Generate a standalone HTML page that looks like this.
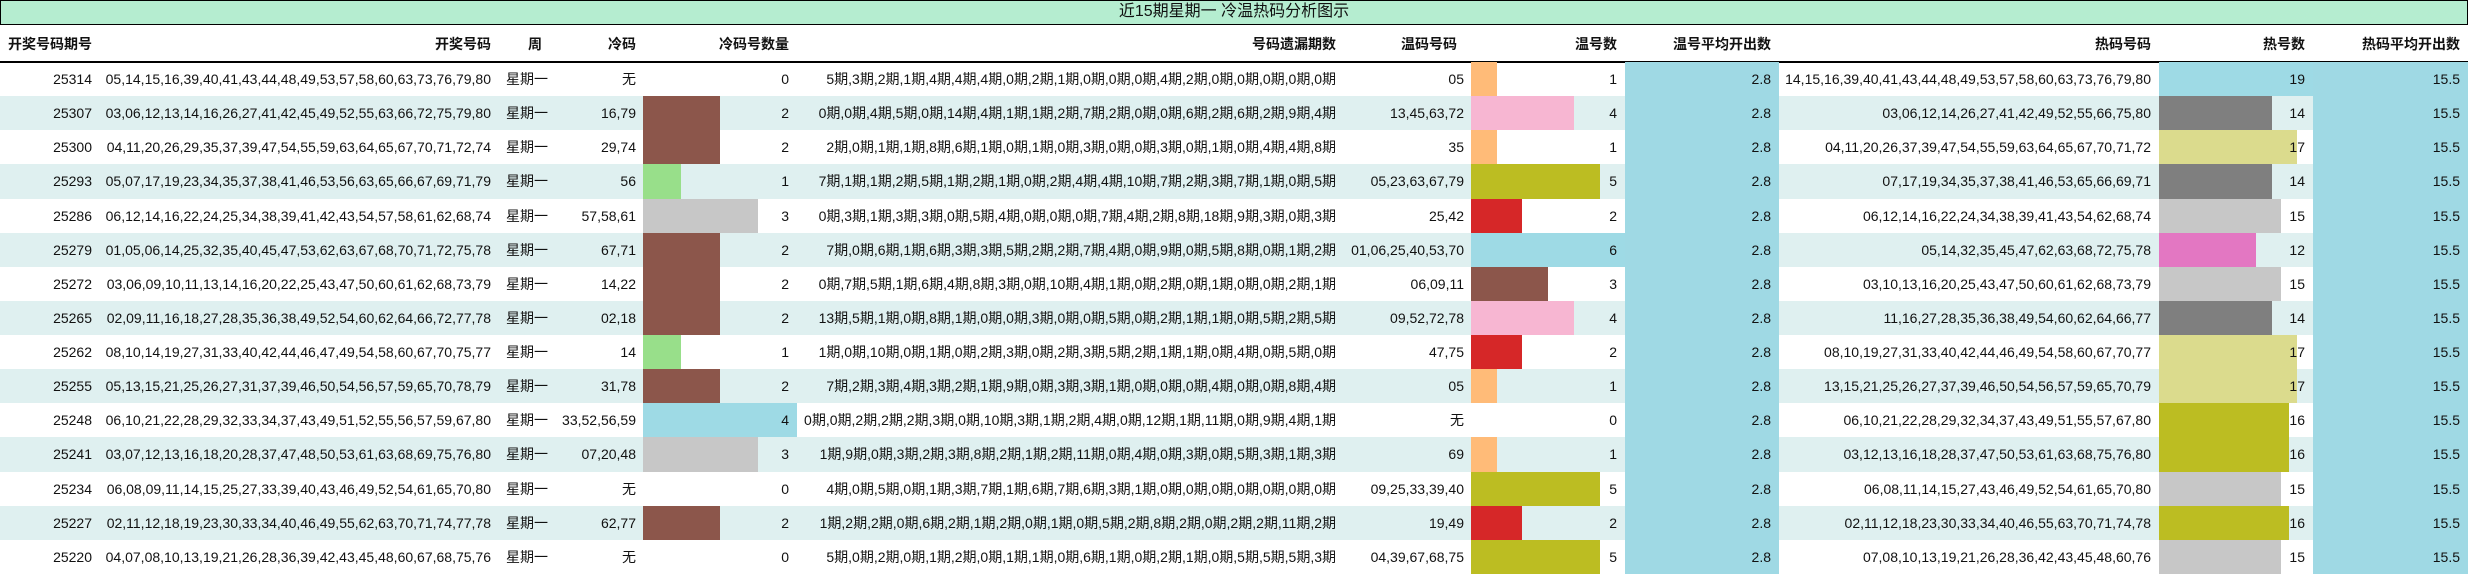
<!DOCTYPE html>
<html><head><meta charset="utf-8"><style>
*{margin:0;padding:0}
body{width:2468px;height:573px;position:relative;overflow:hidden;background:#fff;font-family:"Liberation Sans","Noto Sans CJK SC",sans-serif;font-size:14px;color:#111}
#t{position:absolute;left:0;top:0;width:2468px;height:25px;box-sizing:border-box;border:1.5px solid #000;background:#b5edd0;text-align:center;line-height:22px;font-size:16px}
#h{position:absolute;left:0;top:25px;width:2468px;height:36px;border-bottom:2px solid #000;font-weight:bold}
.r{position:absolute;left:0;width:2468px;height:34.2px}
.z{background:#dff0f0}
.c{position:absolute;top:0;height:100%;text-align:right;line-height:34px;white-space:nowrap;box-sizing:border-box}
#h .c{line-height:38px}
.c span{position:relative}
.b{position:absolute;left:0;top:0;height:100%}
.a{left:0;width:95px;padding-right:3px}
.n{left:95px;width:403px;padding-right:7px}
.w{left:498px;width:62px;padding-left:8px;text-align:left}
.k{left:560px;width:83px;padding-right:7px}
.kb{left:643px;width:154px;padding-right:8px}
.m{left:797px;width:546px;padding-right:7px}
.wc{left:1343px;width:128px;padding-right:7px}
.wb{left:1471px;width:154px;padding-right:8px}
.wa{left:1625px;width:154px;padding-right:8px;background:#9fd9e4}
.hc{left:1779px;width:380px;padding-right:8px}
.hb{left:2159px;width:154px;padding-right:8px}
.ha{left:2313px;width:155px;padding-right:8px;background:#9fd9e4}
#h .wa,#h .ha{background:none}
</style></head><body>
<div id="t">近15期星期一 冷温热码分析图示</div>
<div id="h">
<div class="c" style="left:8px;text-align:left">开奖号码期号</div>
<div class="c n">开奖号码</div>
<div class="c" style="left:500px;width:70px;text-align:center">周</div>
<div class="c k">冷码</div>
<div class="c kb">冷码号数量</div>
<div class="c m">号码遗漏期数</div>
<div class="c" style="left:1343px;width:114px">温码号码</div>
<div class="c wb">温号数</div>
<div class="c wa">温号平均开出数</div>
<div class="c hc">热码号码</div>
<div class="c hb">热号数</div>
<div class="c ha">热码平均开出数</div>
</div>

<div class="r" style="top:62px">
<div class="c a">25314</div><div class="c n">05,14,15,16,39,40,41,43,44,48,49,53,57,58,60,63,73,76,79,80</div><div class="c w">星期一</div><div class="c k">无</div>
<div class="c kb"><span>0</span></div>
<div class="c m">5期,3期,2期,1期,4期,4期,4期,0期,2期,1期,0期,0期,0期,4期,2期,0期,0期,0期,0期,0期</div>
<div class="c wc">05</div><div class="c wb"><i class="b" style="width:26px;background:#ffbb78"></i><span>1</span></div><div class="c wa">2.8</div>
<div class="c hc">14,15,16,39,40,41,43,44,48,49,53,57,58,60,63,73,76,79,80</div><div class="c hb"><i class="b" style="width:154px;background:#9edae5"></i><span>19</span></div><div class="c ha">15.5</div>
</div>

<div class="r z" style="top:96.13px">
<div class="c a">25307</div><div class="c n">03,06,12,13,14,16,26,27,41,42,45,49,52,55,63,66,72,75,79,80</div><div class="c w">星期一</div><div class="c k">16,79</div>
<div class="c kb"><i class="b" style="width:77px;background:#8c564b"></i><span>2</span></div>
<div class="c m">0期,0期,4期,5期,0期,14期,4期,1期,1期,2期,7期,2期,0期,0期,6期,2期,6期,2期,9期,4期</div>
<div class="c wc">13,45,63,72</div><div class="c wb"><i class="b" style="width:103px;background:#f7b6d2"></i><span>4</span></div><div class="c wa">2.8</div>
<div class="c hc">03,06,12,14,26,27,41,42,49,52,55,66,75,80</div><div class="c hb"><i class="b" style="width:113px;background:#7f7f7f"></i><span>14</span></div><div class="c ha">15.5</div>
</div>

<div class="r" style="top:130.26px">
<div class="c a">25300</div><div class="c n">04,11,20,26,29,35,37,39,47,54,55,59,63,64,65,67,70,71,72,74</div><div class="c w">星期一</div><div class="c k">29,74</div>
<div class="c kb"><i class="b" style="width:77px;background:#8c564b"></i><span>2</span></div>
<div class="c m">2期,0期,1期,1期,8期,6期,1期,0期,1期,0期,3期,0期,0期,3期,0期,1期,0期,4期,4期,8期</div>
<div class="c wc">35</div><div class="c wb"><i class="b" style="width:26px;background:#ffbb78"></i><span>1</span></div><div class="c wa">2.8</div>
<div class="c hc">04,11,20,26,37,39,47,54,55,59,63,64,65,67,70,71,72</div><div class="c hb"><i class="b" style="width:138px;background:#dbdb8d"></i><span>17</span></div><div class="c ha">15.5</div>
</div>

<div class="r z" style="top:164.39px">
<div class="c a">25293</div><div class="c n">05,07,17,19,23,34,35,37,38,41,46,53,56,63,65,66,67,69,71,79</div><div class="c w">星期一</div><div class="c k">56</div>
<div class="c kb"><i class="b" style="width:38px;background:#98df8a"></i><span>1</span></div>
<div class="c m">7期,1期,1期,2期,5期,1期,2期,1期,0期,2期,4期,4期,10期,7期,2期,3期,7期,1期,0期,5期</div>
<div class="c wc">05,23,63,67,79</div><div class="c wb"><i class="b" style="width:129px;background:#bcbd22"></i><span>5</span></div><div class="c wa">2.8</div>
<div class="c hc">07,17,19,34,35,37,38,41,46,53,65,66,69,71</div><div class="c hb"><i class="b" style="width:113px;background:#7f7f7f"></i><span>14</span></div><div class="c ha">15.5</div>
</div>

<div class="r" style="top:198.52px">
<div class="c a">25286</div><div class="c n">06,12,14,16,22,24,25,34,38,39,41,42,43,54,57,58,61,62,68,74</div><div class="c w">星期一</div><div class="c k">57,58,61</div>
<div class="c kb"><i class="b" style="width:115px;background:#c7c7c7"></i><span>3</span></div>
<div class="c m">0期,3期,1期,3期,3期,0期,5期,4期,0期,0期,0期,7期,4期,2期,8期,18期,9期,3期,0期,3期</div>
<div class="c wc">25,42</div><div class="c wb"><i class="b" style="width:51px;background:#d62728"></i><span>2</span></div><div class="c wa">2.8</div>
<div class="c hc">06,12,14,16,22,24,34,38,39,41,43,54,62,68,74</div><div class="c hb"><i class="b" style="width:122px;background:#c7c7c7"></i><span>15</span></div><div class="c ha">15.5</div>
</div>

<div class="r z" style="top:232.65px">
<div class="c a">25279</div><div class="c n">01,05,06,14,25,32,35,40,45,47,53,62,63,67,68,70,71,72,75,78</div><div class="c w">星期一</div><div class="c k">67,71</div>
<div class="c kb"><i class="b" style="width:77px;background:#8c564b"></i><span>2</span></div>
<div class="c m">7期,0期,6期,1期,6期,3期,3期,5期,2期,2期,7期,4期,0期,9期,0期,5期,8期,0期,1期,2期</div>
<div class="c wc">01,06,25,40,53,70</div><div class="c wb"><i class="b" style="width:154px;background:#9edae5"></i><span>6</span></div><div class="c wa">2.8</div>
<div class="c hc">05,14,32,35,45,47,62,63,68,72,75,78</div><div class="c hb"><i class="b" style="width:97px;background:#e377c2"></i><span>12</span></div><div class="c ha">15.5</div>
</div>

<div class="r" style="top:266.78px">
<div class="c a">25272</div><div class="c n">03,06,09,10,11,13,14,16,20,22,25,43,47,50,60,61,62,68,73,79</div><div class="c w">星期一</div><div class="c k">14,22</div>
<div class="c kb"><i class="b" style="width:77px;background:#8c564b"></i><span>2</span></div>
<div class="c m">0期,7期,5期,1期,6期,4期,8期,3期,0期,10期,4期,1期,0期,2期,0期,1期,0期,0期,2期,1期</div>
<div class="c wc">06,09,11</div><div class="c wb"><i class="b" style="width:77px;background:#8c564b"></i><span>3</span></div><div class="c wa">2.8</div>
<div class="c hc">03,10,13,16,20,25,43,47,50,60,61,62,68,73,79</div><div class="c hb"><i class="b" style="width:122px;background:#c7c7c7"></i><span>15</span></div><div class="c ha">15.5</div>
</div>

<div class="r z" style="top:300.91px">
<div class="c a">25265</div><div class="c n">02,09,11,16,18,27,28,35,36,38,49,52,54,60,62,64,66,72,77,78</div><div class="c w">星期一</div><div class="c k">02,18</div>
<div class="c kb"><i class="b" style="width:77px;background:#8c564b"></i><span>2</span></div>
<div class="c m">13期,5期,1期,0期,8期,1期,0期,0期,3期,0期,0期,5期,0期,2期,1期,1期,0期,5期,2期,5期</div>
<div class="c wc">09,52,72,78</div><div class="c wb"><i class="b" style="width:103px;background:#f7b6d2"></i><span>4</span></div><div class="c wa">2.8</div>
<div class="c hc">11,16,27,28,35,36,38,49,54,60,62,64,66,77</div><div class="c hb"><i class="b" style="width:113px;background:#7f7f7f"></i><span>14</span></div><div class="c ha">15.5</div>
</div>

<div class="r" style="top:335.04px">
<div class="c a">25262</div><div class="c n">08,10,14,19,27,31,33,40,42,44,46,47,49,54,58,60,67,70,75,77</div><div class="c w">星期一</div><div class="c k">14</div>
<div class="c kb"><i class="b" style="width:38px;background:#98df8a"></i><span>1</span></div>
<div class="c m">1期,0期,10期,0期,1期,0期,2期,3期,0期,2期,3期,5期,2期,1期,1期,0期,4期,0期,5期,0期</div>
<div class="c wc">47,75</div><div class="c wb"><i class="b" style="width:51px;background:#d62728"></i><span>2</span></div><div class="c wa">2.8</div>
<div class="c hc">08,10,19,27,31,33,40,42,44,46,49,54,58,60,67,70,77</div><div class="c hb"><i class="b" style="width:138px;background:#dbdb8d"></i><span>17</span></div><div class="c ha">15.5</div>
</div>

<div class="r z" style="top:369.17px">
<div class="c a">25255</div><div class="c n">05,13,15,21,25,26,27,31,37,39,46,50,54,56,57,59,65,70,78,79</div><div class="c w">星期一</div><div class="c k">31,78</div>
<div class="c kb"><i class="b" style="width:77px;background:#8c564b"></i><span>2</span></div>
<div class="c m">7期,2期,3期,4期,3期,2期,1期,9期,0期,3期,3期,1期,0期,0期,0期,4期,0期,0期,8期,4期</div>
<div class="c wc">05</div><div class="c wb"><i class="b" style="width:26px;background:#ffbb78"></i><span>1</span></div><div class="c wa">2.8</div>
<div class="c hc">13,15,21,25,26,27,37,39,46,50,54,56,57,59,65,70,79</div><div class="c hb"><i class="b" style="width:138px;background:#dbdb8d"></i><span>17</span></div><div class="c ha">15.5</div>
</div>

<div class="r" style="top:403.3px">
<div class="c a">25248</div><div class="c n">06,10,21,22,28,29,32,33,34,37,43,49,51,52,55,56,57,59,67,80</div><div class="c w">星期一</div><div class="c k">33,52,56,59</div>
<div class="c kb"><i class="b" style="width:154px;background:#9edae5"></i><span>4</span></div>
<div class="c m">0期,0期,2期,2期,2期,3期,0期,10期,3期,1期,2期,4期,0期,12期,1期,11期,0期,9期,4期,1期</div>
<div class="c wc">无</div><div class="c wb"><span>0</span></div><div class="c wa">2.8</div>
<div class="c hc">06,10,21,22,28,29,32,34,37,43,49,51,55,57,67,80</div><div class="c hb"><i class="b" style="width:130px;background:#bcbd22"></i><span>16</span></div><div class="c ha">15.5</div>
</div>

<div class="r z" style="top:437.43px">
<div class="c a">25241</div><div class="c n">03,07,12,13,16,18,20,28,37,47,48,50,53,61,63,68,69,75,76,80</div><div class="c w">星期一</div><div class="c k">07,20,48</div>
<div class="c kb"><i class="b" style="width:115px;background:#c7c7c7"></i><span>3</span></div>
<div class="c m">1期,9期,0期,3期,2期,3期,8期,2期,1期,2期,11期,0期,4期,0期,3期,0期,5期,3期,1期,3期</div>
<div class="c wc">69</div><div class="c wb"><i class="b" style="width:26px;background:#ffbb78"></i><span>1</span></div><div class="c wa">2.8</div>
<div class="c hc">03,12,13,16,18,28,37,47,50,53,61,63,68,75,76,80</div><div class="c hb"><i class="b" style="width:130px;background:#bcbd22"></i><span>16</span></div><div class="c ha">15.5</div>
</div>

<div class="r" style="top:471.56px">
<div class="c a">25234</div><div class="c n">06,08,09,11,14,15,25,27,33,39,40,43,46,49,52,54,61,65,70,80</div><div class="c w">星期一</div><div class="c k">无</div>
<div class="c kb"><span>0</span></div>
<div class="c m">4期,0期,5期,0期,1期,3期,7期,1期,6期,7期,6期,3期,1期,0期,0期,0期,0期,0期,0期,0期</div>
<div class="c wc">09,25,33,39,40</div><div class="c wb"><i class="b" style="width:129px;background:#bcbd22"></i><span>5</span></div><div class="c wa">2.8</div>
<div class="c hc">06,08,11,14,15,27,43,46,49,52,54,61,65,70,80</div><div class="c hb"><i class="b" style="width:122px;background:#c7c7c7"></i><span>15</span></div><div class="c ha">15.5</div>
</div>

<div class="r z" style="top:505.69px">
<div class="c a">25227</div><div class="c n">02,11,12,18,19,23,30,33,34,40,46,49,55,62,63,70,71,74,77,78</div><div class="c w">星期一</div><div class="c k">62,77</div>
<div class="c kb"><i class="b" style="width:77px;background:#8c564b"></i><span>2</span></div>
<div class="c m">1期,2期,2期,0期,6期,2期,1期,2期,0期,1期,0期,5期,2期,8期,2期,0期,2期,2期,11期,2期</div>
<div class="c wc">19,49</div><div class="c wb"><i class="b" style="width:51px;background:#d62728"></i><span>2</span></div><div class="c wa">2.8</div>
<div class="c hc">02,11,12,18,23,30,33,34,40,46,55,63,70,71,74,78</div><div class="c hb"><i class="b" style="width:130px;background:#bcbd22"></i><span>16</span></div><div class="c ha">15.5</div>
</div>

<div class="r" style="top:539.82px">
<div class="c a">25220</div><div class="c n">04,07,08,10,13,19,21,26,28,36,39,42,43,45,48,60,67,68,75,76</div><div class="c w">星期一</div><div class="c k">无</div>
<div class="c kb"><span>0</span></div>
<div class="c m">5期,0期,2期,0期,1期,2期,0期,1期,1期,0期,6期,1期,0期,2期,1期,0期,5期,5期,5期,3期</div>
<div class="c wc">04,39,67,68,75</div><div class="c wb"><i class="b" style="width:129px;background:#bcbd22"></i><span>5</span></div><div class="c wa">2.8</div>
<div class="c hc">07,08,10,13,19,21,26,28,36,42,43,45,48,60,76</div><div class="c hb"><i class="b" style="width:122px;background:#c7c7c7"></i><span>15</span></div><div class="c ha">15.5</div>
</div>
</body></html>
